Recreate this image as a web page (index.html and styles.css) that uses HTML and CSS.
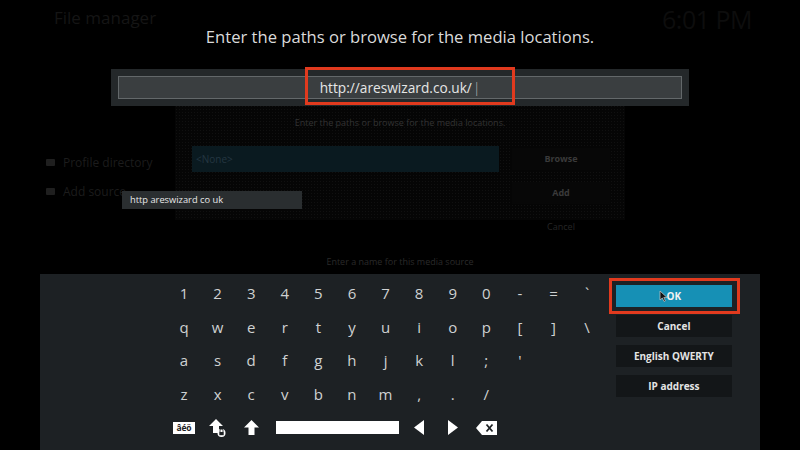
FILE: index.html
```html
<!DOCTYPE html>
<html>
<head>
<meta charset="utf-8">
<link rel="stylesheet" href="styles.css">
</head>
<body>
<div class="screen">
  <div class="backdrop">
    <div class="bg-header">
      <span class="bg-title">File manager</span>
      <span class="bg-clock">6:01 PM</span>
    </div>
    <div class="bg-body">
      <div class="bg-side">
        <div class="bg-item"><span class="fold"></span>Profile directory</div>
        <div class="bg-item"><span class="fold"></span>Add source</div>
      </div>
      <div class="ghost">
        <div class="ghost-title">Enter the paths or browse for the media locations.</div>
        <div class="ghost-row">
          <div class="ghost-none">&lt;None&gt;</div>
          <div class="ghost-btns">
            <div class="ghost-btn">Browse</div>
            <div class="ghost-btn">Add</div>
            <div class="ghost-btn plain">Cancel</div>
          </div>
        </div>
      </div>
    </div>
    <div class="bg-name">Enter a name for this media source</div>
  </div>

  <div class="fore">
    <div class="title">Enter the paths or browse for the media locations.</div>
    <div class="inputbar">
      <div class="field">http://areswizard.co.uk/<span class="caret">|</span></div>
      <div class="hl hl-input"></div>
    </div>
    <div class="suggest">http areswizard co uk</div>
    <div class="keyboard">
      <div class="keys">
        <span>1</span><span>2</span><span>3</span><span>4</span><span>5</span><span>6</span><span>7</span><span>8</span><span>9</span><span>0</span><span>-</span><span>=</span><span>`</span>
        <span>q</span><span>w</span><span>e</span><span>r</span><span>t</span><span>y</span><span>u</span><span>i</span><span>o</span><span>p</span><span>[</span><span>]</span><span>\</span>
        <span>a</span><span>s</span><span>d</span><span>f</span><span>g</span><span>h</span><span>j</span><span>k</span><span>l</span><span>;</span><span>'</span><span></span><span></span>
        <span>z</span><span>x</span><span>c</span><span>v</span><span>b</span><span>n</span><span>m</span><span>,</span><span>.</span><span>/</span><span></span><span></span><span></span>
        <span><b class="accent">âéö</b></span>
        <span>
          <svg width="18" height="20" viewBox="0 0 18 20"><path d="M7 1 L14 8 L10 8 L10 15 L4 15 L4 8 L0 8 Z" fill="#fff"/><circle cx="12.5" cy="15" r="4" fill="#fff"/><rect x="10.3" y="14" width="4.4" height="3.2" fill="#1d2124"/><path d="M11 14 v-1.3 a1.5 1.5 0 0 1 3 0 V14" stroke="#1d2124" stroke-width="0.9" fill="none"/></svg>
        </span>
        <span>
          <svg width="15" height="16" viewBox="0 0 15 16"><path d="M7.5 0 L15 7.5 L10.5 7.5 L10.5 15 L4.5 15 L4.5 7.5 L0 7.5 Z" fill="#fff"/></svg>
        </span>
        <span class="space-cell"><i class="spacebar"></i></span>
        <span>
          <svg width="11" height="15" viewBox="0 0 11 15"><path d="M10 0 L10 15 L0 7.5 Z" fill="#fff"/></svg>
        </span>
        <span>
          <svg width="11" height="15" viewBox="0 0 11 15"><path d="M1 0 L11 7.5 L1 15 Z" fill="#fff"/></svg>
        </span>
        <span>
          <svg width="21" height="14" viewBox="0 0 21 14"><path d="M6 0 H21 V14 H6 L0 7 Z" fill="#fff"/><path d="M10.5 3.5 L16.5 10.5 M16.5 3.5 L10.5 10.5" stroke="#1d2124" stroke-width="1.8"/></svg>
        </span>
      </div>
      <div class="actions">
        <div class="btn ok">OK<div class="hl hl-ok"></div>
          <svg class="pointer" width="9" height="12" viewBox="0 0 9 12"><path d="M1 1 L1 10 L3.3 8 L5 11.5 L6.4 10.8 L4.8 7.4 L8 7.4 Z" fill="#111" stroke="#bbb" stroke-width="0.8"/></svg>
        </div>
        <div class="btn">Cancel</div>
        <div class="btn">English QWERTY</div>
        <div class="btn">IP address</div>
      </div>
    </div>
  </div>
</div>
</body>
</html>
```
FILE: styles.css
```css
* { box-sizing: border-box; }
html, body { margin: 0; padding: 0; background: #000; }
.screen {
  position: relative;
  width: 800px;
  height: 450px;
  overflow: hidden;
  background: #000;
  font-family: "Open Sans", "Noto Sans", sans-serif;
}

/* dimmed background layer */
.backdrop { position: absolute; inset: 0; }
.bg-header {
  display: flex;
  justify-content: space-between;
  align-items: flex-start;
  height: 40px;
  padding: 5px 48px 0 54px;
}
.bg-title { font-size: 17px; color: #151515; line-height: 26px; }
.bg-clock { font-size: 25px; color: #0d0d0d; line-height: 28px; letter-spacing: -0.5px; }
.bg-body { display: flex; margin-top: 65px; }
.bg-side { width: 175px; padding: 43px 0 0 46px; }
.bg-item {
  display: flex; align-items: center; gap: 8px;
  font-size: 12px; color: #1c1c1c; height: 29px; white-space: nowrap;
}
.fold { width: 9px; height: 7px; background: #1f1f1f; border-radius: 1px; }
.ghost {
  width: 450px; height: 115px;
  background-color: #050505;
  background-image: radial-gradient(#101010 0.6px, transparent 0.8px);
  background-size: 3px 3px;
  padding: 12px 0 0 17px;
}
.ghost-title { font-size: 9px; color: #333; text-align: center; width: 416px; line-height: 12px; }
.ghost-row { display: flex; gap: 13px; margin-top: 17px; }
.ghost-none {
  width: 307px; height: 26px; background: #0a1a20;
  color: #243640; font-size: 10px; padding: 6px 4px;
}
.ghost-btns { display: flex; flex-direction: column; gap: 12px; margin-top: 2px; }
.ghost-btn {
  width: 98px; height: 22px; background: #070707;
  color: #3a3a3a; font-size: 9px; font-weight: 700; text-align: center; line-height: 22px;
}
.ghost-btn.plain { background: transparent; color: #262626; font-weight: 400; }
.bg-name {
  position: absolute; left: 0; right: 0; top: 255px;
  text-align: center; font-size: 9px; color: #2a2a2a;
}

/* foreground */
.fore { position: relative; padding-top: 25px; }
.title {
  text-align: center; font-size: 16.6px; line-height: 24px; color: #dadada;
}
.inputbar {
  position: relative;
  margin: 20px 0 0 111px;
  width: 578px; height: 37px;
  background: #24282a;
  padding: 7px;
}
.field {
  height: 23px;
  border: 1px solid #63686a;
  background: #3a3e40;
  color: #e6e6e6;
  font-size: 13.7px; line-height: 21px;
  text-align: center;
}
.caret { color: #bbb; margin-left: 1px; font-weight: 300; }
.hl { position: absolute; border: 3px solid #e13a1e; pointer-events: none; }
.hl-input { left: 194px; top: -2px; width: 210px; height: 38px; }
.suggest {
  margin: 85px 0 0 122px;
  width: 180px; height: 18px;
  background: #2a2e30;
  color: #e8e8e8; font-size: 9.3px; line-height: 18px; padding-left: 8px;
}
.keyboard {
  display: flex;
  margin: 65px 0 0 40px;
  width: 720px; height: 176px;
  background: #1d2124;
  padding: 2px 0 0 127.2px;
}
.keys {
  display: grid;
  grid-template-columns: repeat(13, 33.6px);
  grid-auto-rows: 33.7px;
}
.keys > span {
  display: flex; align-items: center; justify-content: center;
  color: #cfd1d2; font-size: 15px; font-weight: 400;
}
.accent {
  display: block; width: 22px; height: 12px; background: #fff;
  color: #1d2124; font-size: 8.5px; line-height: 12px; font-weight: 700; text-align: center;
  letter-spacing: -0.2px;
}
.space-cell { grid-column: span 4; justify-content: flex-start !important; padding-left: 7.6px; }
.spacebar { display: block; width: 123px; height: 13px; background: #fff; }
.actions {
  display: flex; flex-direction: column; gap: 8px;
  margin: 9px 0 0 12px;
}
.btn {
  position: relative;
  width: 116px; height: 22px;
  background: #131618;
  color: #e4e4e4; font-size: 10px; font-weight: 700;
  text-align: center; line-height: 22px;
}
.btn.ok { background: #1690b5; color: #f2f2f2; }
.hl-ok { left: -7px; top: -7px; width: 131px; height: 36px; }
.pointer { position: absolute; left: 43px; top: 5px; }
```
